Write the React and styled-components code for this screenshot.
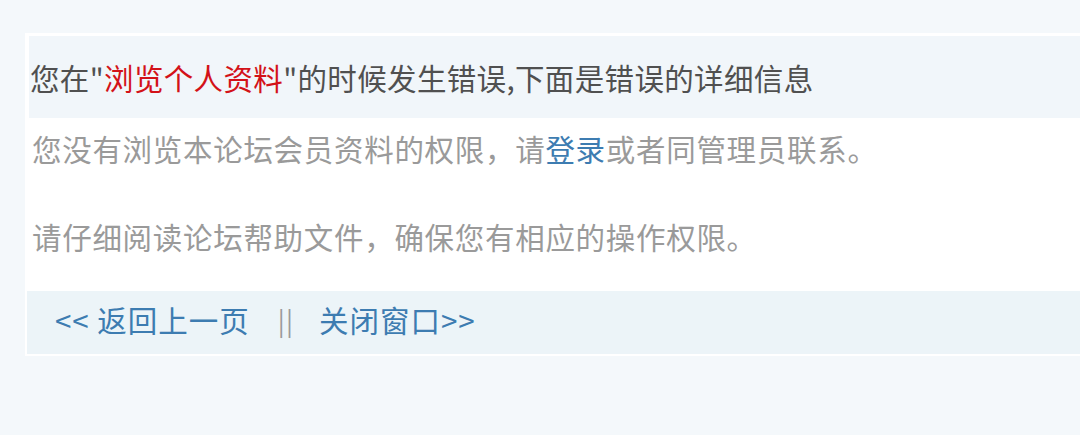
import React from 'react';
import styled, { createGlobalStyle } from 'styled-components';

const GlobalStyle = createGlobalStyle`
  html, body {
    margin: 0;
    padding: 0;
    background: #f4f8fb;
    overflow: hidden;
  }
  body {
    font-family: "Noto Sans CJK SC", "Noto Sans", sans-serif;
  }
`;

const Page = styled.div`
  width: 1080px;
  height: 435px;
  padding: 33px 0 0 25px;
  box-sizing: border-box;
  overflow: hidden;
`;

const Card = styled.div`
  width: 1120px;
  background: #ffffff;
  padding: 3px 0 2px 2px;
  box-sizing: border-box;
`;

const Header = styled.div`
  height: 82px;
  margin-left: 2px;
  background: #f1f6fa;
  display: flex;
  align-items: center;
  padding-left: 1px;
  font-size: 29.5px;
  letter-spacing: 0.35px;
  color: #505050;
  white-space: nowrap;
`;

const Highlight = styled.span`
  color: #d31218;
`;

const Body = styled.div`
  padding: 10px 0 35px 5px;
  font-size: 29.5px;
  letter-spacing: 0.7px;
  color: #9a9a9a;
`;

const Para = styled.p`
  margin: 0;
  line-height: 40px;
  white-space: nowrap;

  & + & {
    margin-top: 48px;
  }
`;

const Link = styled.a`
  color: #3d7cb1;
  text-decoration: none;
`;

const Footer = styled.div`
  height: 63px;
  box-sizing: border-box;
  padding: 0 0 7px 28px;
  background: #ecf4f8;
  display: flex;
  align-items: center;
  font-size: 29.5px;
  letter-spacing: 1px;
  color: #4d88ba;
  white-space: nowrap;
`;

const Sep = styled.span`
  color: #9a9a9a;
  font-size: 26px;
  letter-spacing: 1px;
  margin: 0 25px 0 28px;
`;

export default function App() {
  return (
    <>
      <GlobalStyle />
      <Page>
        <Card>
          <Header>
            您在"<Highlight>浏览个人资料</Highlight>"的时候发生错误,下面是错误的详细信息
          </Header>
          <Body>
            <Para>
              您没有浏览本论坛会员资料的权限，请<Link href="#">登录</Link>或者同管理员联系。
            </Para>
            <Para>请仔细阅读论坛帮助文件，确保您有相应的操作权限。</Para>
          </Body>
          <Footer>
            <Link as="span">&lt;&lt; 返回上一页</Link>
            <Sep>||</Sep>
            <Link as="span">关闭窗口&gt;&gt;</Link>
          </Footer>
        </Card>
      </Page>
    </>
  );
}
